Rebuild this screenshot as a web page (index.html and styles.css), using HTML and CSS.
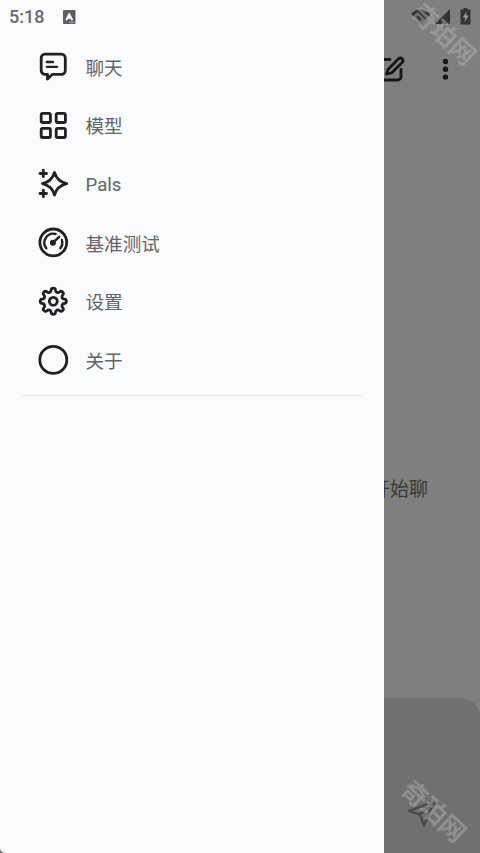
FILE: index.html
```
<!DOCTYPE html>
<html lang="zh-CN">
<head>
<meta charset="utf-8">
<title>聊天</title>
<link rel="stylesheet" href="styles.css">
</head>
<body>
<div class="app">
  <main class="chat">
    <header class="toolbar">
      <svg class="edit" width="30" height="30" viewBox="0 0 30 30"><path d="M14 5.500H7a3 3 0 0 0-3 3V23a3 3 0 0 0 3 3h14.500a3.500 3.500 0 0 0 3.500-3.500V15.500"/><path d="M12 15.500 22.500 4.800a2.500 2.500 0 0 1 3.600 3.600L15.500 19l-5 1.200Z"/></svg>
      <svg class="more" width="8" height="24" viewBox="0 0 8 24"><circle cx="4.500" cy="4.500" r="2.700"/><circle cx="4.500" cy="12.300" r="2.700"/><circle cx="4.500" cy="20.100" r="2.700"/></svg>
    </header>
    <p class="hint">开始聊</p>
    <footer class="composer">
      <svg class="send" width="32" height="32" viewBox="0 0 32 32"><path d="M28 4.500 3 14l11 3.500L18 28.500Z"/><path d="M28 4.500 14 17.500"/></svg>
    </footer>
  </main>

  <aside class="drawer">
    <nav class="menu">
      <a class="item"><svg width="32" height="32" viewBox="0 0 32 32"><path d="M8 3.200H24.500a3.800 3.800 0 0 1 3.800 3.800v12.500a3.800 3.800 0 0 1-3.800 3.800H15.500l-5 4.700V23.300H8a3.800 3.800 0 0 1-3.800-3.800V7A3.800 3.800 0 0 1 8 3.200Z"/><path d="M9.800 11h6.200M9.800 15.800h10.400" stroke-width="2.300"/></svg><span>聊天</span></a>
      <a class="item"><svg width="32" height="32" viewBox="0 0 32 32"><rect x="4.200" y="3.300" width="9.200" height="9.200" rx="1.500"/><rect x="19.200" y="3.300" width="9.200" height="9.200" rx="1.500"/><rect x="4.200" y="18.300" width="9.200" height="9.200" rx="1.500"/><rect x="19.200" y="18.300" width="9.200" height="9.200" rx="1.500"/></svg><span>模型</span></a>
      <a class="item"><svg width="32" height="32" viewBox="0 0 32 32"><path d="M17.500 4.500q2.600 9 12.200 11.100Q20.100 17.800 17.500 27 14.900 17.800 5.500 15.600 14.900 13.500 17.500 4.500Z"/><path d="M6.300 2.200v6.500M3 5.500h6.500M6.300 22.200v6.500M3 25.500h6.500"/></svg><span class="latin">Pals</span></a>
      <a class="item"><svg width="32" height="32" viewBox="0 0 32 32"><circle cx="16.300" cy="15.400" r="13.400"/><path d="M9.300 21.300A9 9 0 0 1 18.600 7M24.900 13A9 9 0 0 1 23.300 21.300M16.500 15.200l5.700-5.400" stroke-width="2.400"/><circle class="solid" cx="15.900" cy="15.800" r="3"/></svg><span>基准测试</span></a>
      <a class="item"><svg width="32" height="32" viewBox="0 0 32 32"><g transform="translate(16.300 15.300)"><path d="M11.080-2.200A2.210 2.210 0 0 1 11.080 2.200A2.350 2.350 0 0 0 9.400 6.280A2.210 2.210 0 0 1 6.280 9.400A2.350 2.350 0 0 0 2.200 11.080A2.210 2.210 0 0 1-2.200 11.080A2.350 2.350 0 0 0-6.280 9.400A2.210 2.210 0 0 1-9.400 6.280A2.350 2.350 0 0 0-11.080 2.200A2.210 2.210 0 0 1-11.080-2.200A2.350 2.350 0 0 0-9.400-6.280A2.210 2.210 0 0 1-6.280-9.400A2.350 2.350 0 0 0-2.200-11.080A2.210 2.210 0 0 1 2.200-11.080A2.350 2.350 0 0 0 6.280-9.400A2.210 2.210 0 0 1 9.400-6.280A2.350 2.350 0 0 0 11.080-2.200Z"/><circle r="4"/></g></svg><span>设置</span></a>
      <a class="item"><svg width="32" height="32" viewBox="0 0 32 32"><circle cx="16.300" cy="15.900" r="13.500"/></svg><span>关于</span></a>
    </nav>
    <hr class="divider">
  </aside>

  <div class="status">
    <span class="time">5:18</span>
    <svg class="badge" width="13" height="14" viewBox="0 0 13 14"><rect width="12.500" height="14" rx="1"/><path d="M3.500 9.500 6.200 4 9 9.500M4.600 8h3.300"/><path class="dots" d="M6.500 12.200H11"/></svg>
    <svg class="signals" width="62" height="18" viewBox="0 0 62 18"><path d="M1 5.500Q11-3 21 5.500L11 16Z"/><path d="M25 16 40 1v15Z"/><path d="M53.500 0h4v1.500H60.500V16.500H50.500V1.500h3Z"/><path class="bolt" d="M56.500 3.500 52.800 9.500h2.400l-.7 4.800 4.100-6.800h-2.400Z"/></svg>
  </div>

  <div class="mark mark-top">奇珀网</div>
  <div class="mark mark-bottom">奇珀网</div>
</div>
</body>
</html>
```
FILE: styles.css
```
body {
  margin: 0;
  background: #7f7f7f;
  font-family: Roboto, "Noto Sans CJK SC", sans-serif;
}
.app {
  position: relative;
  width: 480px;
  height: 853px;
  overflow: hidden;
}
svg {
  display: block;
  flex: none;
  fill: none;
  stroke: #202123;
  stroke-width: 2.8;
  stroke-linecap: round;
  stroke-linejoin: round;
}
.chat {
  display: flex;
  flex-direction: column;
  height: 853px;
  background: #7f7f7f;
}
.toolbar {
  display: flex;
  align-items: center;
  justify-content: flex-end;
  gap: 35px;
  box-sizing: border-box;
  height: 84px;
  padding: 54px 31px 0 0;
}
.edit, .more { stroke: #171717; }
.more { fill: #171717; stroke: none; }
.hint {
  flex: 1;
  margin: 0;
  padding: 392px 52px 0 0;
  text-align: right;
  font-size: 19px;
  line-height: 28px;
  color: #383838;
}
.composer {
  display: flex;
  justify-content: flex-end;
  box-sizing: border-box;
  height: 155px;
  padding: 99px 42px 0 0;
  border-radius: 20px 20px 0 0;
  background: #707070;
}
.send { stroke: #484848; stroke-width: 2.3; }
.drawer {
  position: absolute;
  top: 0;
  left: 0;
  box-sizing: border-box;
  width: 384px;
  height: 853px;
  padding: 38px 22px 0;
  border-bottom-left-radius: 5px;
  background: #f9fbfd;
}
.menu {
  display: flex;
  flex-direction: column;
}
.item {
  display: flex;
  align-items: center;
  gap: 16.5px;
  height: 58.6px;
  padding-left: 15px;
  color: #626466;
  font-size: 18.6px;
}
.item span { padding-bottom: 2px; }
.item .latin { padding: 1px 0 0; }
.item .solid { fill: #202123; stroke: none; }
.divider {
  height: 1px;
  margin: 5px 0 0;
  border: 0;
  background: #e5e7e9;
}
.status {
  position: absolute;
  top: 0;
  left: 0;
  display: flex;
  align-items: center;
  box-sizing: border-box;
  width: 480px;
  height: 33px;
  padding: 0 8px 0 9px;
}
.time {
  width: 54px;
  font-size: 18px;
  font-weight: 500;
  color: #68696b;
}
.badge { fill: #5d5e60; stroke: none; }
.badge path { fill: none; stroke: #f9fbfd; stroke-width: 1.8; }
.badge .dots { stroke-width: .6; }
.signals {
  margin-left: auto;
  fill: #343434;
  stroke: none;
}
.signals .bolt { fill: #9a9a9a; }
.mark {
  position: absolute;
  width: 78px;
  height: 30px;
  font-family: "Noto Sans CJK SC", sans-serif;
  font-size: 25.5px;
  font-weight: 700;
  line-height: 30px;
  text-align: center;
  white-space: nowrap;
  color: rgba(180, 180, 180, .48);
  transform: rotate(43deg);
}
.mark-top { top: 18px; left: 406px; }
.mark-bottom { top: 795px; left: 396px; }
```
